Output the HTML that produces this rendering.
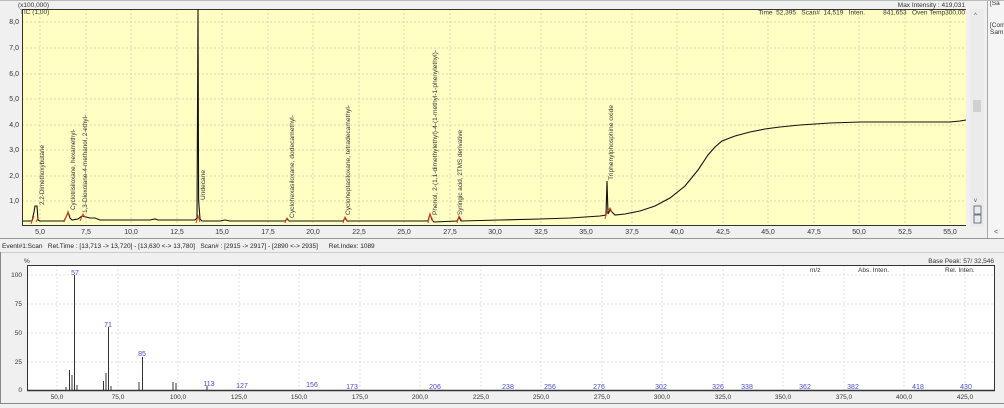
<!DOCTYPE html>
<html><head><meta charset="utf-8"><style>
html,body{margin:0;padding:0;width:1004px;height:408px;overflow:hidden;background:#f0f0f0}
svg{display:block;font-family:"Liberation Sans",sans-serif}
</style></head><body>
<svg width="1004" height="408" viewBox="0 0 1004 408" xmlns="http://www.w3.org/2000/svg">
<rect width="1004" height="408" fill="#f0f0f0"/>
<!-- top plot -->
<rect x="22" y="9" width="944" height="216" fill="#ffffc4"/>
<g stroke="#d8d8b0" stroke-width="1" stroke-dasharray="2,2">
<line x1="22" x2="966" y1="22" y2="22"/><line x1="22" x2="966" y1="48" y2="48"/><line x1="22" x2="966" y1="74" y2="74"/><line x1="22" x2="966" y1="99" y2="99"/><line x1="22" x2="966" y1="125" y2="125"/><line x1="22" x2="966" y1="150" y2="150"/><line x1="22" x2="966" y1="176" y2="176"/><line x1="22" x2="966" y1="201" y2="201"/>
<line x1="40" x2="40" y1="9" y2="225"/><line x1="86" x2="86" y1="9" y2="225"/><line x1="131" x2="131" y1="9" y2="225"/><line x1="177" x2="177" y1="9" y2="225"/><line x1="222" x2="222" y1="9" y2="225"/><line x1="268" x2="268" y1="9" y2="225"/><line x1="313" x2="313" y1="9" y2="225"/><line x1="359" x2="359" y1="9" y2="225"/><line x1="404" x2="404" y1="9" y2="225"/><line x1="450" x2="450" y1="9" y2="225"/><line x1="495" x2="495" y1="9" y2="225"/><line x1="541" x2="541" y1="9" y2="225"/><line x1="586" x2="586" y1="9" y2="225"/><line x1="632" x2="632" y1="9" y2="225"/><line x1="677" x2="677" y1="9" y2="225"/><line x1="723" x2="723" y1="9" y2="225"/><line x1="768" x2="768" y1="9" y2="225"/><line x1="814" x2="814" y1="9" y2="225"/><line x1="859" x2="859" y1="9" y2="225"/><line x1="905" x2="905" y1="9" y2="225"/><line x1="950" x2="950" y1="9" y2="225"/>
</g>
<g stroke="#333" fill="none" stroke-width="1">
<line x1="22" y1="9.5" x2="966" y2="9.5"/>
<line x1="22.5" y1="9" x2="22.5" y2="225"/>
<line x1="22" y1="225.5" x2="966" y2="225.5"/>
</g>
<g font-size="7" fill="#333" text-anchor="end">
<text x="19" y="24">8,0</text><text x="19" y="50">7,0</text><text x="19" y="76">6,0</text><text x="19" y="101">5,0</text><text x="19" y="127">4,0</text><text x="19" y="152">3,0</text><text x="19" y="178">2,0</text><text x="19" y="203">1,0</text>
</g>
<g font-size="7" fill="#333" text-anchor="middle">
<text x="40" y="234">5,0</text><text x="86" y="234">7,5</text><text x="131" y="234">10,0</text><text x="177" y="234">12,5</text><text x="222" y="234">15,0</text><text x="268" y="234">17,5</text><text x="313" y="234">20,0</text><text x="359" y="234">22,5</text><text x="404" y="234">25,0</text><text x="450" y="234">27,5</text><text x="495" y="234">30,0</text><text x="541" y="234">32,5</text><text x="586" y="234">35,0</text><text x="632" y="234">37,5</text><text x="677" y="234">40,0</text><text x="723" y="234">42,5</text><text x="768" y="234">45,0</text><text x="814" y="234">47,5</text><text x="859" y="234">50,0</text><text x="905" y="234">52,5</text><text x="950" y="234">55,0</text>
</g>
<text x="18" y="7" font-size="6.5" fill="#333">(x100,000)</text>
<text x="20" y="14" font-size="6.5" fill="#333">TIC (1,00)</text>
<text x="965" y="7" font-size="6.5" fill="#333" text-anchor="end">Max Intensity : 419,031</text>
<text x="965" y="14.5" font-size="6.5" fill="#333" text-anchor="end" xml:space="preserve">Time  52,395   Scan#  14,519   Inten.          841,653   Oven Temp300,00</text>
<!-- trace -->
<polyline fill="none" stroke="#111" stroke-width="1.1" points="23,221 32,221 34,212 35,206 37,206 38,220 40,221 64,221 67,215 68,212 70,218 72,220 78,219 82,216 86,217 90,218 95,218 100,220 150,220 155,219 158,220 195,220 197,218 198,9 198.6,200 200,219 202,221 220,221 225,220 230,221 285,221 287,219 289,221 343,221 345,218 347,221 428,221 430,214 432,220 434,222 457,221 459,217 461,221 500,220 540,219 570,218 600,216 606,215 607,181 608,214 610,210 612,212 615,215 625,214 640,211 655,206 670,198 685,186 698,170 708,155 715,147 722,141 735,136 750,132 765,129 780,127 800,125 830,123 860,122 890,122 920,122 950,122 960,121 966,120"/>
<!-- markers -->
<g stroke="#d84020" fill="none" stroke-width="1">
<path d="M31,224 L34,216 M36,222 L38,218"/><path d="M64,222 L68,212 L70,216"/><path d="M80,221 L83,214 L85,217"/><path d="M196,223 L198,216 L200,222"/><path d="M285,223 L287,218 L290,222"/><path d="M343,223 L345,217 L348,222"/><path d="M428,223 L430,214 L433,221"/><path d="M457,223 L459,216 L462,221"/><path d="M605,219 L607,212 L610,208 L612,212"/>
</g>
<!-- labels -->
<g font-size="6.5" fill="#333">
<text transform="translate(44,205) rotate(-90)" textLength="60" lengthAdjust="spacingAndGlyphs">2,2-Dimethoxybutane</text>
<text transform="translate(75,210) rotate(-90)" textLength="81" lengthAdjust="spacingAndGlyphs">Cyclotrisiloxane, hexamethyl-</text>
<text transform="translate(87,213) rotate(-90)" textLength="98" lengthAdjust="spacingAndGlyphs">1,3-Dioxolane-4-methanol, 2-ethyl-</text>
<text transform="translate(205,200) rotate(-90)" textLength="30" lengthAdjust="spacingAndGlyphs">Undecane</text>
<text transform="translate(294,218) rotate(-90)" textLength="103" lengthAdjust="spacingAndGlyphs">Cyclohexasiloxane, dodecamethyl-</text>
<text transform="translate(350,215) rotate(-90)" textLength="110" lengthAdjust="spacingAndGlyphs">Cycloheptasiloxane, tetradecamethyl-</text>
<text transform="translate(437,215) rotate(-90)" textLength="165" lengthAdjust="spacingAndGlyphs">Phenol, 2-(1,1-dimethylethyl)-4-(1-methyl-1-phenylethyl)-</text>
<text transform="translate(462,215) rotate(-90)" textLength="85" lengthAdjust="spacingAndGlyphs">Syringic acid, 2TMS derivative</text>
<text transform="translate(613,180) rotate(-90)" textLength="75" lengthAdjust="spacingAndGlyphs">Triphenylphosphine oxide</text>
</g>
<!-- right side -->
<rect x="970" y="9" width="14" height="218" fill="#ebebeb"/>
<rect x="973" y="100" width="8" height="12" fill="#d0d0d0"/>
<text x="974" y="17" font-size="6" fill="#555">^</text>
<text x="974" y="202" font-size="6" fill="#555">v</text>
<rect x="974" y="206" width="7" height="8" fill="none" stroke="#557" stroke-width="0.8"/>
<rect x="974" y="215" width="7" height="8" fill="none" stroke="#557" stroke-width="0.8"/>
<rect x="987" y="0" width="17" height="238" fill="#f5f5f5"/>
<line x1="987.5" y1="0" x2="987.5" y2="238" stroke="#aaa"/>
<text x="990" y="5" font-size="6.5" fill="#333">[Sa</text>
<text x="990" y="27" font-size="6.5" fill="#333">[Com</text>
<text x="990" y="34" font-size="6.5" fill="#333">Sam</text>
<text x="994" y="234" font-size="7" fill="#555">&lt;</text>
<!-- divider -->
<line x1="0" y1="238.5" x2="1004" y2="238.5" stroke="#999"/>
<line x1="0" y1="0.5" x2="1004" y2="0.5" stroke="#bbb"/>
<text x="2" y="248" font-size="6.5" fill="#222" xml:space="preserve">Event#1:Scan   Ret.Time : [13,713 -&gt; 13,720] - [13,630 &lt;-&gt; 13,780]   Scan# : [2915 -&gt; 2917] - [2890 &lt;-&gt; 2935]      Ret.Index: 1089</text>
<line x1="0" y1="252.5" x2="1004" y2="252.5" stroke="#ccc"/>
<!-- bottom plot -->
<rect x="27" y="265" width="968" height="125" fill="#fff"/>
<g stroke="#e0e0e0" stroke-dasharray="2,2">
<line x1="27" x2="995" y1="275" y2="275"/><line x1="27" x2="995" y1="304" y2="304"/><line x1="27" x2="995" y1="333" y2="333"/><line x1="27" x2="995" y1="362" y2="362"/>
<line x1="57" x2="57" y1="265" y2="390"/><line x1="118" x2="118" y1="265" y2="390"/><line x1="178" x2="178" y1="265" y2="390"/><line x1="239" x2="239" y1="265" y2="390"/><line x1="299" x2="299" y1="265" y2="390"/><line x1="360" x2="360" y1="265" y2="390"/><line x1="420" x2="420" y1="265" y2="390"/><line x1="481" x2="481" y1="265" y2="390"/><line x1="541" x2="541" y1="265" y2="390"/><line x1="602" x2="602" y1="265" y2="390"/><line x1="662" x2="662" y1="265" y2="390"/><line x1="723" x2="723" y1="265" y2="390"/><line x1="783" x2="783" y1="265" y2="390"/><line x1="844" x2="844" y1="265" y2="390"/><line x1="904" x2="904" y1="265" y2="390"/><line x1="965" x2="965" y1="265" y2="390"/>
</g>
<g stroke="#333" fill="none">
<line x1="27" y1="265.5" x2="995" y2="265.5"/>
<line x1="27.5" y1="265" x2="27.5" y2="391"/>
<line x1="27" y1="390.5" x2="995" y2="390.5" stroke-width="1.5"/>
<line x1="994.5" y1="265" x2="994.5" y2="391"/>
</g>
<g font-size="6.5" fill="#333" text-anchor="end">
<text x="22" y="277">100</text><text x="22" y="306">75</text><text x="22" y="335">50</text><text x="22" y="364">25</text><text x="22" y="392">0</text>
</g>
<text x="24" y="263" font-size="6.5" fill="#333">%</text>
<g font-size="6.5" fill="#333" text-anchor="middle">
<text x="57" y="399">50,0</text><text x="118" y="399">75,0</text><text x="178" y="399">100,0</text><text x="239" y="399">125,0</text><text x="299" y="399">150,0</text><text x="360" y="399">175,0</text><text x="420" y="399">200,0</text><text x="481" y="399">225,0</text><text x="541" y="399">250,0</text><text x="602" y="399">275,0</text><text x="662" y="399">300,0</text><text x="723" y="399">325,0</text><text x="783" y="399">350,0</text><text x="844" y="399">375,0</text><text x="904" y="399">400,0</text><text x="965" y="399">425,0</text>
</g>
<g stroke="#333" stroke-width="1">
<line x1="74.5" y1="390" x2="74.5" y2="275"/><line x1="108.5" y1="390" x2="108.5" y2="327"/><line x1="142.5" y1="390" x2="142.5" y2="357"/>
<line x1="69.5" y1="390" x2="69.5" y2="370"/><line x1="72" y1="390" x2="72" y2="375"/><line x1="77" y1="390" x2="77" y2="385"/>
<line x1="103.5" y1="390" x2="103.5" y2="381"/><line x1="106" y1="390" x2="106" y2="373"/><line x1="111" y1="390" x2="111" y2="386"/>
<line x1="139" y1="390" x2="139" y2="382"/><line x1="173" y1="390" x2="173" y2="382"/><line x1="176" y1="390" x2="176" y2="383"/>
<line x1="207" y1="390" x2="207" y2="386"/><line x1="66" y1="390" x2="66" y2="387"/>
</g>
<g font-size="7" fill="#4a4acc" text-anchor="middle">
<text x="75" y="275">57</text><text x="108" y="327">71</text><text x="142" y="356">85</text><text x="209" y="386">113</text><text x="242" y="388">127</text><text x="312" y="387">156</text><text x="352" y="389">173</text><text x="435" y="389">206</text><text x="508" y="389">238</text><text x="550" y="389">256</text><text x="599" y="389">276</text><text x="661" y="389">302</text><text x="718" y="389">326</text><text x="747" y="389">338</text><text x="805" y="389">362</text><text x="853" y="389">382</text><text x="918" y="389">418</text><text x="966" y="389">430</text>
</g>
<text x="994" y="263" font-size="6.5" fill="#333" text-anchor="end">Base Peak: 57/ 32,546</text>
<g font-size="6.5" fill="#333">
<text x="810" y="272">m/z</text><text x="858" y="272">Abs. Inten.</text><text x="945" y="272">Rel. Inten.</text>
</g>
<line x1="0" y1="403.5" x2="1004" y2="403.5" stroke="#888"/>
<line x1="0.5" y1="252" x2="0.5" y2="403" stroke="#888"/>
</svg>
</body></html>
